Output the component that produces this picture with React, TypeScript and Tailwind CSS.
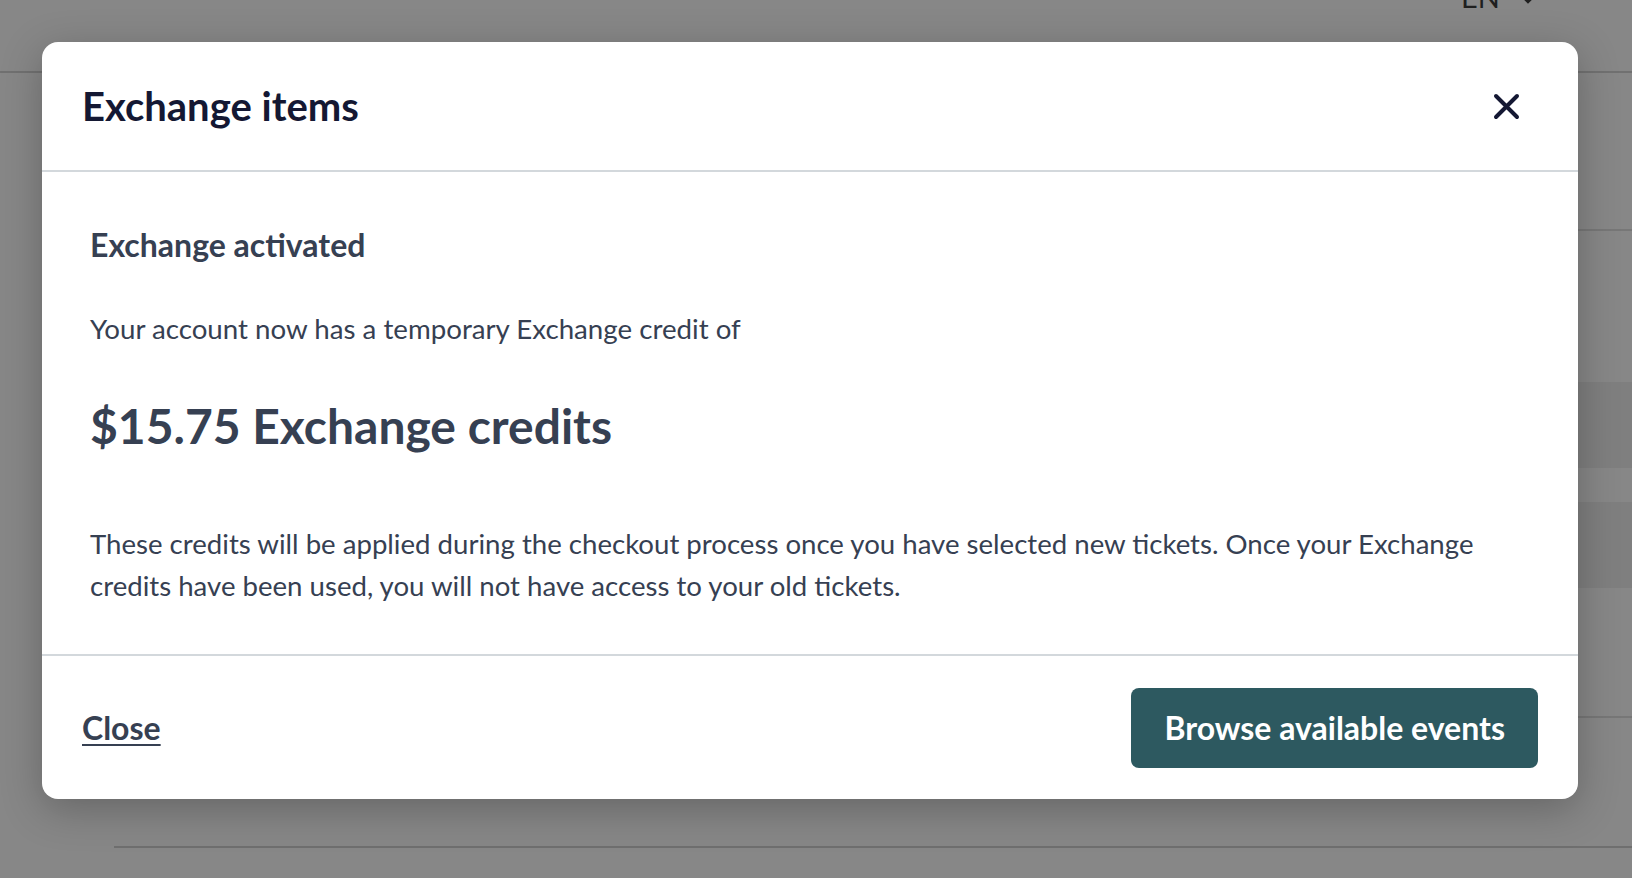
function PaginaFundo() {
  return (
    <div className="flex flex-col h-full">
      <div className="h-[73px] border-b-2 border-[#717171] flex justify-end items-start pr-[97px]">
        <div className="-mt-[18px] flex items-start gap-[21px] text-[#1f1f1f]">
          <span className="text-[29px] leading-none">EN</span>
          <svg className="mt-[13px]" width="14" height="9" viewBox="0 0 14 9" fill="none" stroke="currentColor" strokeWidth="2.5" strokeLinecap="round">
            <path d="M2 2 L7 7 L12 2" />
          </svg>
        </div>
      </div>
      <div className="flex">
        <div className="flex-1" />
        <div className="w-[720px] flex flex-col">
          <div className="h-[158px] border-b-2 border-[#777777]" />
          <div className="h-[151px]" />
          <div className="h-[86px] bg-[#7f7f7f]" />
          <div className="h-[34px]" />
          <div className="h-[86px] bg-[#7f7f7f]" />
          <div className="h-[130px] border-b-2 border-[#777777]" />
        </div>
      </div>
      <div className="mt-[128px] ml-[114px] border-t-2 border-[#6f6f6f]" />
    </div>
  );
}

function ModalTroca() {
  return (
    <div className="w-[1536px] bg-white rounded-2xl shadow-[0_10px_40px_rgba(0,0,0,0.25)] flex flex-col overflow-hidden">
      <header className="h-[130px] flex items-center justify-between pl-10 pr-[58px] border-b-2 border-[#d3d8dc]">
        <h1 className="text-[40px] font-bold leading-[1.2] text-[#141833]">Exchange items</h1>
        <button className="text-[#141833]">
          <svg width="27" height="27" viewBox="0 0 27 27" fill="none" stroke="currentColor" strokeWidth="4" strokeLinecap="round">
            <path d="M3 3 L24 24 M24 3 L3 24" />
          </svg>
        </button>
      </header>

      <div className="px-12 pt-[54px] pb-[47px] text-[#364052]">
        <h2 className="text-[32px] font-bold leading-[38px]">Exchange activated</h2>
        <p className="mt-[48px] text-[27.7px] leading-[34px]">
          Your account now has a temporary Exchange credit of
        </p>
        <p className="mt-[51px] text-[48px] font-bold leading-[58px]">$15.75 Exchange credits</p>
        <p className="mt-[68px] text-[27.6px] leading-[42px]">
          These credits will be applied during the checkout process once you have selected new tickets. Once your Exchange credits have been used, you will not have access to your old tickets.
        </p>
      </div>

      <footer className="h-[145px] border-t-2 border-[#d3d8dc] flex items-center justify-between px-10">
        <button className="text-[32px] font-bold text-[#364052] underline decoration-2 underline-offset-[4px]">
          Close
        </button>
        <button className="h-[80px] px-[33px] rounded-lg bg-[#2d5960] text-white text-[32px] font-bold">
          Browse available events
        </button>
      </footer>
    </div>
  );
}

export default function App() {
  return (
    <div className="relative h-screen w-full overflow-hidden bg-[#878787] font-['Lato',sans-serif]">
      <PaginaFundo />
      <div className="absolute inset-0 pt-[42px] pl-[42px]">
        <ModalTroca />
      </div>
    </div>
  );
}
